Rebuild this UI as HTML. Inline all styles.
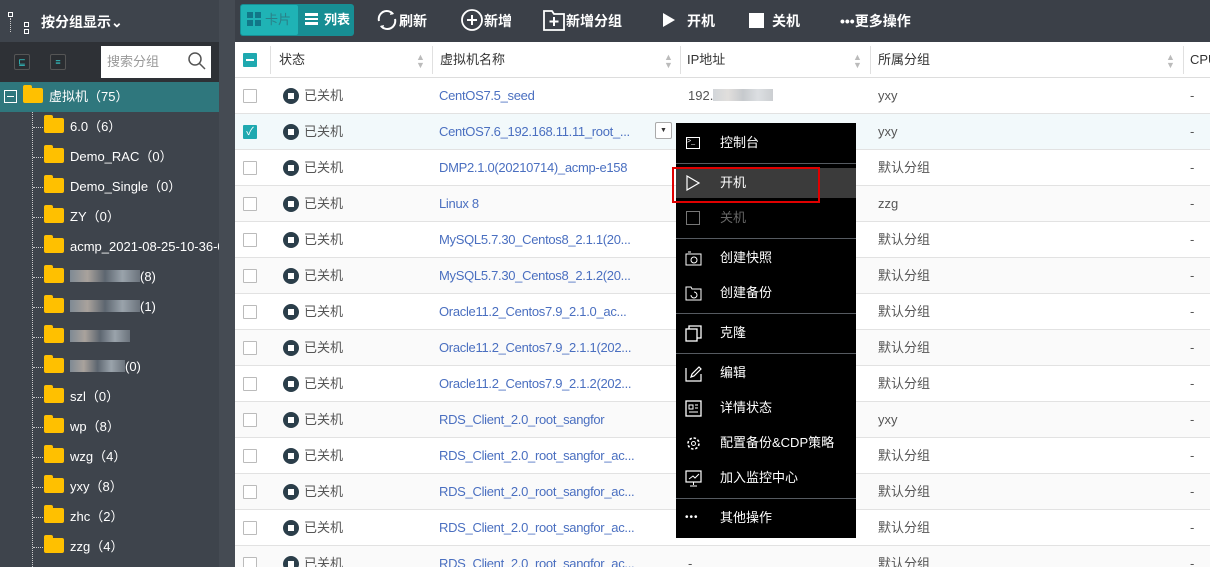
<!DOCTYPE html>
<html><head><meta charset="utf-8"><style>
*{box-sizing:border-box;margin:0;padding:0}
html,body{width:1210px;height:567px;overflow:hidden}
body{position:relative;background:#fff;font-family:"Liberation Sans","Noto Sans CJK SC",sans-serif;font-size:13px}
.abs{position:absolute}
#side{left:0;top:0;width:219px;height:567px;background:#3e444c}
#strip{left:219px;top:0;width:16px;height:567px;background:#454b53}
#top{left:235px;top:0;width:975px;height:42px;background:#3b4048}
.tb{position:absolute;top:0;height:42px;line-height:42px;color:#fff;font-size:14px;font-weight:bold}
.tr{position:absolute;left:0;height:30px;line-height:30px;color:#fff;font-size:13px}
.fold{display:inline-block;width:20px;height:15px;background:#ffc000;border-radius:2px;vertical-align:-2px;margin-right:6px;position:relative}
.fold:before{content:"";position:absolute;left:0;top:-3px;width:9px;height:4px;background:#ffc000;border-radius:2px 2px 0 0}
.row{position:absolute;left:235px;width:975px;height:36px;border-bottom:1px solid #e2e2e2;line-height:35px;color:#555}
.row span{position:absolute;white-space:nowrap}
.cb{left:8px;top:11px;width:14px;height:14px;border:1px solid #bbb;background:#fff;border-radius:1px}
.st{left:48px;top:10px;width:16px;height:16px;border-radius:50%;background:#2b3e4a}
.st:after{content:"";position:absolute;left:5px;top:5px;width:6px;height:6px;background:#fff}
.nm{left:204px;color:#4a6fc0;letter-spacing:-0.3px}
.mi{position:absolute;left:0;width:180px;height:34px;line-height:34px;color:#fff;font-size:13px}
.mi b{position:absolute;left:44px;font-weight:normal}
.ic{position:absolute;left:10px;top:10px;width:14px;height:14px;border:1.5px solid #fff}
.dv{position:absolute;left:0;width:180px;height:1px;background:#555a60}
.blur{display:inline-block;height:12px;vertical-align:-1px;background:linear-gradient(90deg,#7f8a94,#a9a29c,#5d6670,#9aa3ab,#6b737c)}
</style></head><body>
<div id="side" class="abs">
 <div class="abs" style="left:8px;top:12px;width:22px;height:22px">
  <div class="abs" style="left:0;top:0;width:5px;height:5px;border:1.5px solid #fff"></div>
  <div class="abs" style="left:16px;top:10px;width:5px;height:5px;border:1.5px solid #fff"></div>
  <div class="abs" style="left:16px;top:17px;width:5px;height:5px;border:1.5px solid #fff"></div>
  <div class="abs" style="left:2px;top:6px;width:0;height:14px;border-left:1px dotted #ccc"></div>
 </div>
 <div class="abs" style="left:41px;top:12px;color:#fff;font-size:14px;font-weight:bold">按分组显示⌄</div>
 <div class="abs" style="left:0;top:42px;width:219px;height:40px;background:#2e3136"></div>
 <div class="abs" style="left:14px;top:54px;width:16px;height:16px;border:1px solid #555;border-radius:2px;background:#2a2d31;color:#3cc;font-size:9px;line-height:14px;text-align:center">⊑</div>
 <div class="abs" style="left:50px;top:54px;width:16px;height:16px;border:1px solid #555;border-radius:2px;background:#2a2d31;color:#3cc;font-size:9px;line-height:14px;text-align:center">≡</div>
 <div class="abs" style="left:101px;top:46px;width:110px;height:32px;background:#fff;color:#999;font-size:13px;line-height:32px;padding-left:6px">搜索分组</div>
 <svg class="abs" style="left:187px;top:51px" width="20" height="20"><circle cx="8" cy="8" r="6" fill="none" stroke="#555" stroke-width="1.5"/><line x1="12.5" y1="12.5" x2="18" y2="18" stroke="#555" stroke-width="1.5"/></svg>
 <div class="abs" style="left:0;top:82px;width:219px;height:30px;background:#2f777d"></div>
 <div class="tr" style="top:82px;left:4px"><span style="display:inline-block;width:13px;height:13px;border:1px solid #fff;vertical-align:-2px;position:relative;margin-right:6px"><span class="abs" style="left:2px;top:5px;width:7px;height:1px;background:#fff"></span></span><span class="fold"></span>虚拟机（75）</div>
 <div class="abs" style="left:32px;top:112px;height:455px;border-left:1px dotted #ccc"></div>
 <div id="tree"></div>
</div>
<div id="strip" class="abs"></div>
<div id="top" class="abs">
 <div class="abs" style="left:5px;top:4px;width:114px;height:32px;background:#178e94;border-radius:3px"></div>
 <div class="abs" style="left:6px;top:5px;width:57px;height:30px;background:#1fb3b5;border-radius:2px;color:#2a8088;line-height:30px;font-size:13px;padding-left:6px"><span style="display:inline-block;width:14px;height:14px;background:linear-gradient(#178 0 0) 0 0/6px 6px no-repeat,linear-gradient(#178 0 0) 8px 0/6px 6px no-repeat,linear-gradient(#178 0 0) 0 8px/6px 6px no-repeat,linear-gradient(#178 0 0) 8px 8px/6px 6px no-repeat;vertical-align:-2px;margin-right:4px"></span>卡片</div>
 <div class="abs" style="left:70px;top:5px;color:#fff;line-height:30px;font-size:13px;font-weight:bold"><span style="display:inline-block;width:13px;height:12px;border-top:3px solid #fff;border-bottom:3px solid #fff;position:relative;vertical-align:-1px;margin-right:6px"><span class="abs" style="left:0;top:2px;width:13px;height:2px;background:#fff"></span></span>列表</div>
 <div class="tb" style="left:140px"><svg width="24" height="24" style="vertical-align:-6px"><path d="M4 13A8 8 0 0 1 18 6M20 11A8 8 0 0 1 6 18" fill="none" stroke="#fff" stroke-width="2"/><path d="M16 3l3 3-4 1z M8 21l-3-3 4-1z" fill="#fff"/></svg>刷新</div>
 <div class="tb" style="left:225px"><svg width="24" height="24" style="vertical-align:-6px"><circle cx="12" cy="12" r="10" fill="none" stroke="#fff" stroke-width="1.8"/><path d="M12 7v10M7 12h10" stroke="#fff" stroke-width="2"/></svg>新增</div>
 <div class="tb" style="left:307px"><svg width="24" height="22" style="vertical-align:-5px"><path d="M2 2h8l2 3h10v16H2z" fill="none" stroke="#fff" stroke-width="1.8"/><path d="M12 8v9M7.5 12.5h9" stroke="#fff" stroke-width="2"/></svg>新增分组</div>
 <div class="tb" style="left:428px"><span style="display:inline-block;width:0;height:0;border-left:12px solid #fff;border-top:7px solid transparent;border-bottom:7px solid transparent;vertical-align:-1px;margin-right:12px"></span>开机</div>
 <div class="tb" style="left:514px"><span style="display:inline-block;width:15px;height:15px;background:#fff;vertical-align:-2px;margin-right:8px"></span>关机</div>
 <div class="tb" style="left:605px">•••更多操作</div>
</div>
<div class="abs" style="left:235px;top:42px;width:975px;height:36px;border-bottom:1px solid #ddd;background:#fff;color:#333;line-height:36px">
 <div class="abs" style="left:8px;top:11px;width:14px;height:14px;background:#1fa9b0;border-radius:1px"><div class="abs" style="left:3px;top:6px;width:8px;height:2px;background:#fff"></div></div>
 <div class="abs" style="left:35px;top:4px;width:1px;height:28px;background:#e0e0e0"></div>
 <span class="abs" style="left:44px">状态</span><span class="abs" style="left:181px;color:#bbb;font-size:9px;line-height:8px;top:11px">▲<br>▼</span>
 <div class="abs" style="left:197px;top:4px;width:1px;height:28px;background:#e0e0e0"></div>
 <span class="abs" style="left:205px">虚拟机名称</span><span class="abs" style="left:429px;color:#bbb;font-size:9px;line-height:8px;top:11px">▲<br>▼</span>
 <div class="abs" style="left:445px;top:4px;width:1px;height:28px;background:#e0e0e0"></div>
 <span class="abs" style="left:452px">IP地址</span><span class="abs" style="left:618px;color:#bbb;font-size:9px;line-height:8px;top:11px">▲<br>▼</span>
 <div class="abs" style="left:635px;top:4px;width:1px;height:28px;background:#e0e0e0"></div>
 <span class="abs" style="left:643px">所属分组</span><span class="abs" style="left:931px;color:#bbb;font-size:9px;line-height:8px;top:11px">▲<br>▼</span>
 <div class="abs" style="left:948px;top:4px;width:1px;height:28px;background:#e0e0e0"></div>
 <span class="abs" style="left:955px">CPU</span>
</div>
<div id="rows"></div>
<div class="abs" style="left:655px;top:122px;width:17px;height:17px;border:1px solid #aaa;border-radius:2px;background:#fff;font-size:7px;text-align:center;line-height:15px;color:#333">▼</div>
<div class="abs" style="left:676px;top:123px;width:180px;height:415px;background:#000">
 <div class="mi" style="top:3px"><div class="ic" style="height:12px;top:11px;font-size:7px;line-height:8px;border-width:1px">&gt;_</div><b>控制台</b></div>
 <div class="dv" style="top:40px"></div>
 <div class="mi" style="top:45px;height:30px;line-height:30px;background:#3b3b3b"><svg class="abs" style="left:9px;top:7px" width="16" height="16"><path d="M2 1L14 8L2 15Z" fill="none" stroke="#fff" stroke-width="1.2"/></svg><b>开机</b></div>
 <div class="mi" style="top:78px;color:#666"><div class="ic" style="border:1px solid #777"></div><b>关机</b></div>
 <div class="dv" style="top:115px"></div>
 <div class="mi" style="top:118px"><svg class="abs" style="left:9px;top:10px" width="17" height="15"><rect x="1" y="3" width="15" height="11" fill="none" stroke="#fff"/><circle cx="9" cy="9" r="3" fill="none" stroke="#fff"/><path d="M3 1h3" stroke="#fff"/></svg><b>创建快照</b></div>
 <div class="mi" style="top:153px"><svg class="abs" style="left:9px;top:10px" width="17" height="15"><path d="M1 1h5l1 2h9v11H1z" fill="none" stroke="#fff"/><path d="M6 9a3 3 0 1 0 3-3" fill="none" stroke="#fff"/></svg><b>创建备份</b></div>
 <div class="dv" style="top:190px"></div>
 <div class="mi" style="top:193px"><svg class="abs" style="left:9px;top:9px" width="17" height="17"><rect x="1" y="4" width="11" height="12" fill="none" stroke="#fff" stroke-width="1.3"/><path d="M4 4V1h12v12h-4" fill="none" stroke="#fff" stroke-width="1.3"/></svg><b>克隆</b></div>
 <div class="dv" style="top:230px"></div>
 <div class="mi" style="top:233px"><svg class="abs" style="left:9px;top:9px" width="17" height="17"><path d="M1 3v13h15V9M6 12l1-3 7-7 2 2-7 7z" fill="none" stroke="#fff" stroke-width="1.2"/></svg><b>编辑</b></div>
 <div class="mi" style="top:268px"><svg class="abs" style="left:9px;top:9px" width="17" height="17"><rect x="1" y="1" width="15" height="15" fill="none" stroke="#fff" stroke-width="1.3"/><path d="M4 5h4v4H4zM10 5h3M10 8h3M4 12h9" fill="none" stroke="#fff"/></svg><b>详情状态</b></div>
 <div class="mi" style="top:303px"><svg class="abs" style="left:9px;top:9px" width="17" height="17"><circle cx="8.5" cy="8.5" r="5.5" fill="none" stroke="#fff" stroke-width="1.6" stroke-dasharray="2.5 1.8"/><circle cx="8.5" cy="8.5" r="2" fill="none" stroke="#fff"/></svg><b>配置备份&amp;CDP策略</b></div>
 <div class="mi" style="top:338px"><svg class="abs" style="left:9px;top:9px" width="17" height="17"><rect x="1" y="1" width="15" height="11" fill="none" stroke="#fff" stroke-width="1.2"/><path d="M8.5 12v3M5 16h7M4 9l4-3 2 2 4-4" fill="none" stroke="#fff"/></svg><b>加入监控中心</b></div>
 <div class="dv" style="top:375px"></div>
 <div class="mi" style="top:378px"><span class="abs" style="left:9px;font-size:10px;letter-spacing:1px">•••</span><b>其他操作</b></div>
</div>
<div class="abs" style="left:672px;top:167px;width:148px;height:36px;border:2px solid #e00000"></div>
<script>
var t=[["6.0（6）"],["Demo_RAC（0）"],["Demo_Single（0）"],["ZY（0）"],["acmp_2021-08-25-10-36-0"],["",70,"(8)"],["",70,"(1)"],["",60,""],["",55,"(0)"],["szl（0）"],["wp（8）"],["wzg（4）"],["yxy（8）"],["zhc（2）"],["zzg（4）"]];
var h="";t.forEach(function(x,i){var y=112+i*30;var c=x.length>1?'<span class="blur" style="width:'+x[1]+'px"></span>'+x[2]:x[0];h+='<div class="abs" style="left:33px;top:'+(y+15)+'px;width:10px;border-top:1px dotted #ccc"></div><div class="tr" style="top:'+y+'px;left:44px;white-space:nowrap;width:175px;overflow:hidden"><span class="fold"></span>'+c+'</div>';});
document.getElementById("tree").innerHTML=h;
var r=[["CentOS7.5_seed","192.<span class=\"blur\" style=\"position:static;width:60px;opacity:.35\"></span>","yxy"],["CentOS7.6_192.168.11.11_root_...","","yxy"],["DMP2.1.0(20210714)_acmp-e158","","默认分组"],["Linux 8","","zzg"],["MySQL5.7.30_Centos8_2.1.1(20...","","默认分组"],["MySQL5.7.30_Centos8_2.1.2(20...","","默认分组"],["Oracle11.2_Centos7.9_2.1.0_ac...","","默认分组"],["Oracle11.2_Centos7.9_2.1.1(202...","","默认分组"],["Oracle11.2_Centos7.9_2.1.2(202...","","默认分组"],["RDS_Client_2.0_root_sangfor","","yxy"],["RDS_Client_2.0_root_sangfor_ac...","","默认分组"],["RDS_Client_2.0_root_sangfor_ac...","","默认分组"],["RDS_Client_2.0_root_sangfor_ac...","","默认分组"],["RDS_Client_2.0_root_sangfor_ac...","-","默认分组"]];
h="";r.forEach(function(x,i){var y=78+i*36;var bg=i==1?"#f2f9fb":(i%2?"#fafafa":"#fff");
h+='<div class="row" style="top:'+y+'px;background:'+bg+'">'+(i==1?'<span class="cb" style="background:#1fa9b0;border-color:#1fa9b0;color:#fff;font-size:11px;line-height:12px;text-align:center">✓</span>':'<span class="cb"></span>')+'<span class="st"></span><span style="left:69px">已关机</span><span class="nm">'+x[0]+'</span><span style="left:453px;color:#555">'+x[1]+'</span><span style="left:643px">'+x[2]+'</span><span style="left:955px">-</span></div>';});
document.getElementById("rows").innerHTML=h;
</script>
</body></html>
